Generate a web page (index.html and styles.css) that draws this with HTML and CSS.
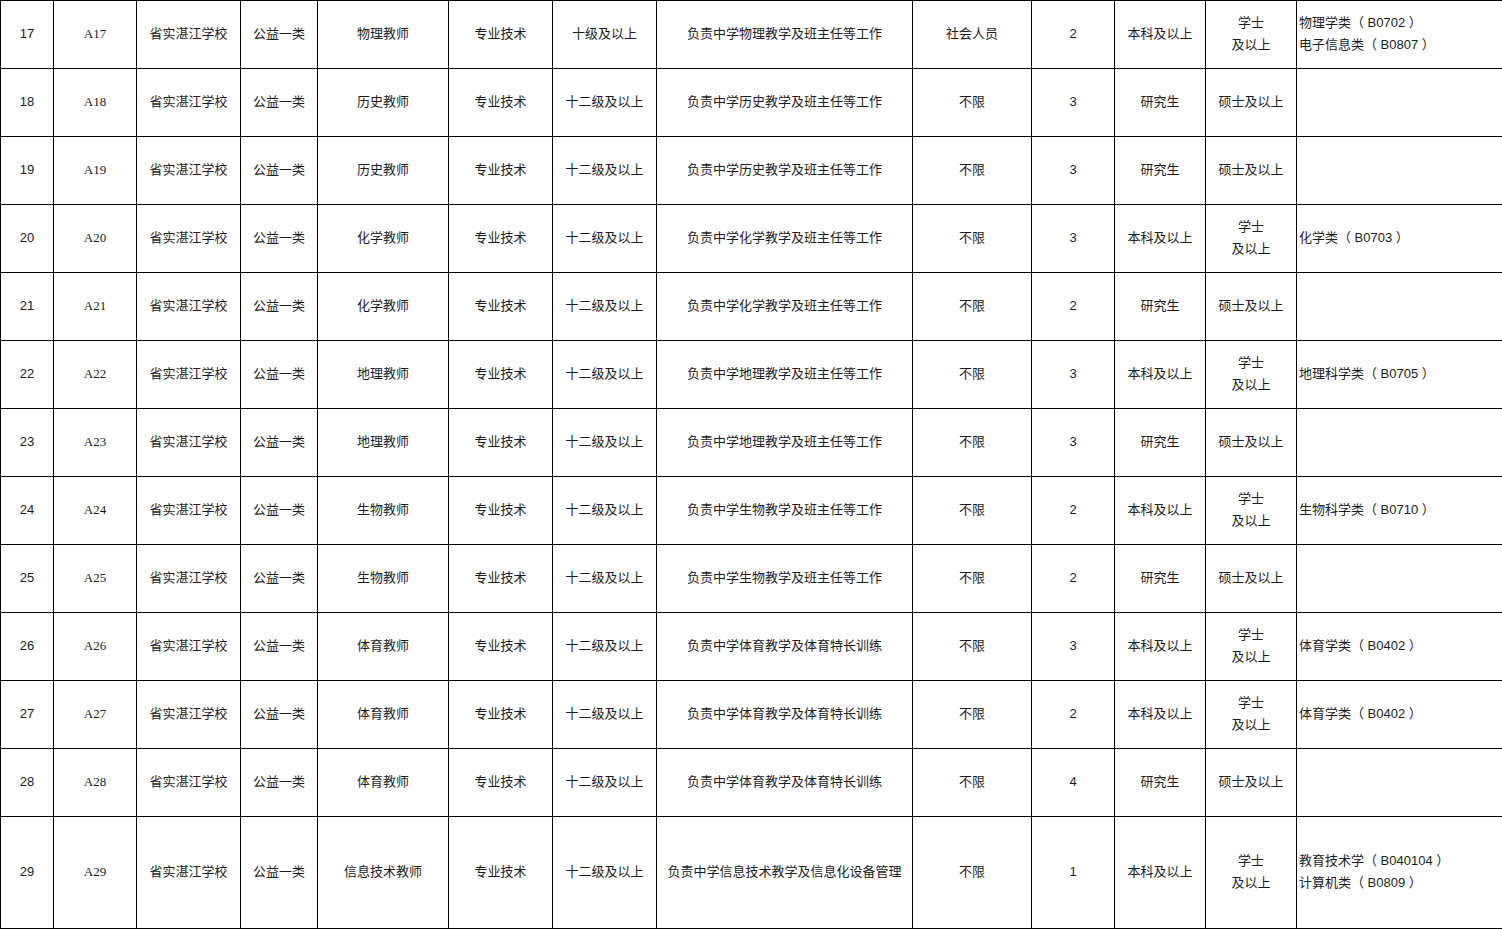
FILE: index.html
```html
<!DOCTYPE html>
<html lang="zh-CN">
<head>
<meta charset="utf-8">
<title>岗位表</title>
<link rel="stylesheet" href="styles.css">
</head>
<body>
<table class="grid">
  <colgroup>
    <col class="w1"><col class="w2"><col class="w3"><col class="w4"><col class="w5"><col class="w6"><col class="w7"><col class="w8"><col class="w9"><col class="w10"><col class="w11"><col class="w12"><col class="w13">
  </colgroup>
  <tbody>
    <tr class="row">
      <td>17</td><td class="code">A17</td><td>省实湛江学校</td><td>公益一类</td><td>物理教师</td><td>专业技术</td><td>十级及以上</td><td>负责中学物理教学及班主任等工作</td><td>社会人员</td><td>2</td><td>本科及以上</td><td>学士<br>及以上</td><td class="major">物理学类（ B0702 ）<br>电子信息类（ B0807 ）</td>
    </tr>
    <tr class="row">
      <td>18</td><td class="code">A18</td><td>省实湛江学校</td><td>公益一类</td><td>历史教师</td><td>专业技术</td><td>十二级及以上</td><td>负责中学历史教学及班主任等工作</td><td>不限</td><td>3</td><td>研究生</td><td>硕士及以上</td><td class="major"></td>
    </tr>
    <tr class="row">
      <td>19</td><td class="code">A19</td><td>省实湛江学校</td><td>公益一类</td><td>历史教师</td><td>专业技术</td><td>十二级及以上</td><td>负责中学历史教学及班主任等工作</td><td>不限</td><td>3</td><td>研究生</td><td>硕士及以上</td><td class="major"></td>
    </tr>
    <tr class="row">
      <td>20</td><td class="code">A20</td><td>省实湛江学校</td><td>公益一类</td><td>化学教师</td><td>专业技术</td><td>十二级及以上</td><td>负责中学化学教学及班主任等工作</td><td>不限</td><td>3</td><td>本科及以上</td><td>学士<br>及以上</td><td class="major">化学类（ B0703 ）</td>
    </tr>
    <tr class="row">
      <td>21</td><td class="code">A21</td><td>省实湛江学校</td><td>公益一类</td><td>化学教师</td><td>专业技术</td><td>十二级及以上</td><td>负责中学化学教学及班主任等工作</td><td>不限</td><td>2</td><td>研究生</td><td>硕士及以上</td><td class="major"></td>
    </tr>
    <tr class="row">
      <td>22</td><td class="code">A22</td><td>省实湛江学校</td><td>公益一类</td><td>地理教师</td><td>专业技术</td><td>十二级及以上</td><td>负责中学地理教学及班主任等工作</td><td>不限</td><td>3</td><td>本科及以上</td><td>学士<br>及以上</td><td class="major">地理科学类（ B0705 ）</td>
    </tr>
    <tr class="row">
      <td>23</td><td class="code">A23</td><td>省实湛江学校</td><td>公益一类</td><td>地理教师</td><td>专业技术</td><td>十二级及以上</td><td>负责中学地理教学及班主任等工作</td><td>不限</td><td>3</td><td>研究生</td><td>硕士及以上</td><td class="major"></td>
    </tr>
    <tr class="row">
      <td>24</td><td class="code">A24</td><td>省实湛江学校</td><td>公益一类</td><td>生物教师</td><td>专业技术</td><td>十二级及以上</td><td>负责中学生物教学及班主任等工作</td><td>不限</td><td>2</td><td>本科及以上</td><td>学士<br>及以上</td><td class="major">生物科学类（ B0710 ）</td>
    </tr>
    <tr class="row">
      <td>25</td><td class="code">A25</td><td>省实湛江学校</td><td>公益一类</td><td>生物教师</td><td>专业技术</td><td>十二级及以上</td><td>负责中学生物教学及班主任等工作</td><td>不限</td><td>2</td><td>研究生</td><td>硕士及以上</td><td class="major"></td>
    </tr>
    <tr class="row">
      <td>26</td><td class="code">A26</td><td>省实湛江学校</td><td>公益一类</td><td>体育教师</td><td>专业技术</td><td>十二级及以上</td><td>负责中学体育教学及体育特长训练</td><td>不限</td><td>3</td><td>本科及以上</td><td>学士<br>及以上</td><td class="major">体育学类（ B0402 ）</td>
    </tr>
    <tr class="row">
      <td>27</td><td class="code">A27</td><td>省实湛江学校</td><td>公益一类</td><td>体育教师</td><td>专业技术</td><td>十二级及以上</td><td>负责中学体育教学及体育特长训练</td><td>不限</td><td>2</td><td>本科及以上</td><td>学士<br>及以上</td><td class="major">体育学类（ B0402 ）</td>
    </tr>
    <tr class="row">
      <td>28</td><td class="code">A28</td><td>省实湛江学校</td><td>公益一类</td><td>体育教师</td><td>专业技术</td><td>十二级及以上</td><td>负责中学体育教学及体育特长训练</td><td>不限</td><td>4</td><td>研究生</td><td>硕士及以上</td><td class="major"></td>
    </tr>
    <tr class="row tall">
      <td>29</td><td class="code">A29</td><td>省实湛江学校</td><td>公益一类</td><td>信息技术教师</td><td>专业技术</td><td>十二级及以上</td><td>负责中学信息技术教学及信息化设备管理</td><td>不限</td><td>1</td><td>本科及以上</td><td>学士<br>及以上</td><td class="major">教育技术学（ B040104 ）<br>计算机类（ B0809 ）</td>
    </tr>
  </tbody>
</table>
</body>
</html>
```

FILE: styles.css
```css
html, body {
  margin: 0;
  padding: 0;
  background: #ffffff;
}

.grid {
  border-collapse: collapse;
  table-layout: fixed;
  width: 1502px;
  font-family: "Liberation Sans", "Noto Sans CJK SC", sans-serif;
  font-size: 13px;
  color: #1c1c1c;
}

.w1 { width: 53px; }
.w2 { width: 83px; }
.w3 { width: 104px; }
.w4 { width: 77px; }
.w5 { width: 131px; }
.w6 { width: 104px; }
.w7 { width: 104px; }
.w8 { width: 256px; }
.w9 { width: 119px; }
.w10 { width: 83px; }
.w11 { width: 91px; }
.w12 { width: 91px; }
.w13 { width: 207px; }

.grid td {
  border: 1px solid #000000;
  padding: 0 0 2px 0;
  text-align: center;
  vertical-align: middle;
  line-height: 22px;
  white-space: nowrap;
  overflow: hidden;
}

.row { height: 68px; }
.row.tall { height: 112px; }

.grid td.code {
  font-family: "Liberation Serif", "Noto Sans CJK SC", serif;
  font-size: 13px;
}

.grid td.major {
  text-align: left;
  padding-left: 2px;
}
```
